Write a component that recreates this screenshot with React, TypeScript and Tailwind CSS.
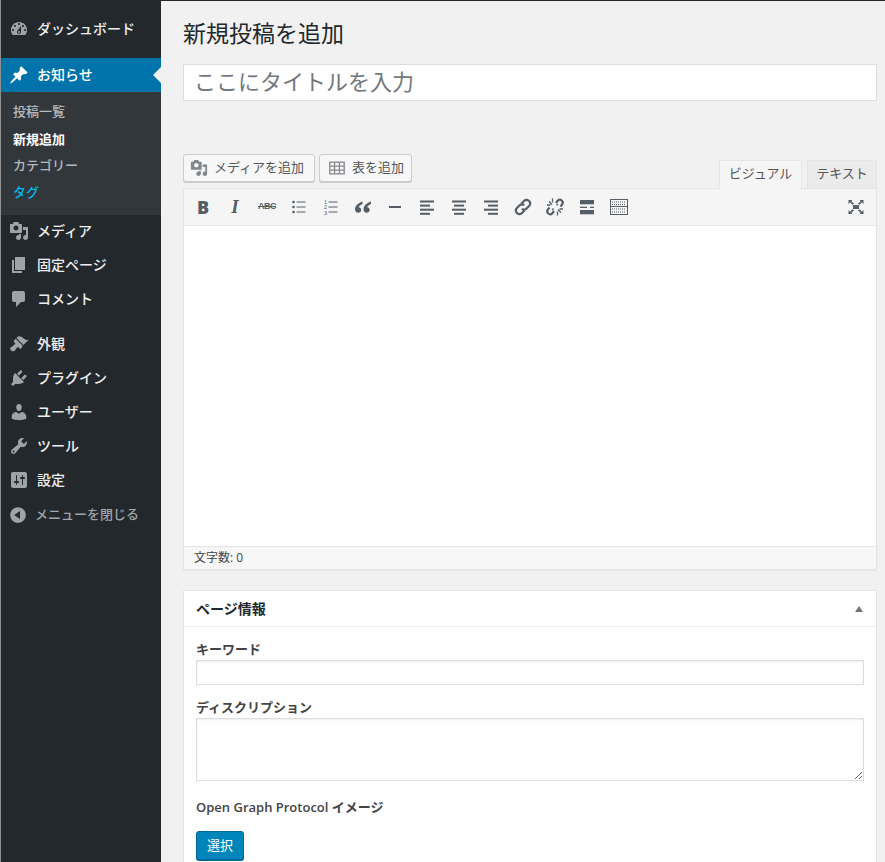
import type { ReactNode } from 'react'

const font = { dashboard: 'M3.76 16h12.48c1.1-1.37 1.76-3.11 1.76-5 0-4.42-3.58-8-8-8s-8 3.58-8 8c0 1.89.66 3.63 1.76 5zM10 4c.55 0 1 .45 1 1s-.45 1-1 1-1-.45-1-1 .45-1 1-1zM6 6c.55 0 1 .45 1 1s-.45 1-1 1-1-.45-1-1 .45-1 1-1zm8 0c.55 0 1 .45 1 1s-.45 1-1 1-1-.45-1-1 .45-1 1-1zm-5.37 5.55L12 7v6c0 1.1-.9 2-2 2s-2-.9-2-2c0-.57.24-1.08.63-1.45zM4 10c.55 0 1 .45 1 1s-.45 1-1 1-1-.45-1-1 .45-1 1-1zm12 0c.55 0 1 .45 1 1s-.45 1-1 1-1-.45-1-1 .45-1 1-1zm-5 3c0-.55-.45-1-1-1s-1 .45-1 1 .45 1 1 1 1-.45 1-1z',
  pin: 'M10.44 3.02l1.82-1.82 6.36 6.35-1.83 1.82c-1.05-.68-2.48-.57-3.41.36l-.75.75c-.92.93-1.04 2.35-.35 3.41l-1.83 1.82-2.41-2.41-2.8 2.79c-.42.42-3.38 2.71-3.8 2.29s1.86-3.39 2.28-3.81l2.79-2.79L4.1 9.36l1.83-1.82c1.05.69 2.48.57 3.4-.36l.75-.75c.93-.92 1.05-2.35.36-3.41z',
  media: 'M13 11V4c0-.55-.45-1-1-1h-1.67L9 1H5L3.67 3H2c-.55 0-1 .45-1 1v7c0 .55.45 1 1 1h10c.55 0 1-.45 1-1zM7 4.5c1.38 0 2.5 1.12 2.5 2.5S8.38 9.5 7 9.5 4.5 8.38 4.5 7 5.62 4.5 7 4.5zM14 6h5v10.5c0 1.38-1.12 2.5-2.5 2.5S14 17.88 14 16.5s1.12-2.5 2.5-2.5c.17 0 .34.02.5.05V9h-3V6zm-4 8.05V13h2v3.5c0 1.38-1.12 2.5-2.5 2.5S7 17.88 7 16.5 8.12 14 9.5 14c.17 0 .34.02.5.05z',
  page: 'M6 15V2h10v13H6zm-1 1h8v2H3V5h2v11z',
  comments: 'M5 2h9c1.1 0 2 .9 2 2v7c0 1.1-.9 2-2 2h-2l-5 5v-5H5c-1.1 0-2-.9-2-2V4c0-1.1.9-2 2-2z',
  appearance: 'M14.48 11.06L7.41 3.99l1.5-1.5c.5-.56 2.3-.47 3.51.32 1.21.8 1.43 1.28 2.91 2.1 1.18.64 2.45 1.26 4.45.85zm-.71.71L6.7 4.7 4.93 6.47c-.39.39-.39 1.02 0 1.41l1.06 1.06c.39.39.39 1.03 0 1.42-.6.6-1.43 1.11-2.21 1.69-.35.26-.7.53-1.01.84C1.43 13.23 1 14.13 1.25 15c.25.87 1.42 2.05 2.29 2.3.87.25 1.77-.18 2.11-.53.3-.3.58-.66.84-1.01.58-.78 1.09-1.61 1.69-2.21.39-.39 1.03-.39 1.42 0l1.06 1.06c.39.39 1.02.39 1.41 0z',
  plugins: 'M13.11 4.36L9.87 7.6 8 5.73l3.24-3.24c.35-.34 1.05-.2 1.56.32.52.51.66 1.21.31 1.55zm-8 1.77l.91-1.12 9.01 9.01-1.19.84c-.71.71-2.63 1.16-3.82 1.16H6.14L4.9 17.26c-.59.59-1.54.59-2.12 0-.59-.58-.59-1.53 0-2.12l1.24-1.24v-3.88c0-1.13.4-3.19 1.09-3.89zm7.26 3.97l3.24-3.24c.34-.35 1.04-.21 1.55.31.52.51.66 1.21.31 1.55l-3.24 3.25z',
  users: 'M10 9.25c-2.27 0-2.73-3.44-2.73-3.44C7 4.02 7.82 2 9.97 2c2.16 0 2.98 2.02 2.71 3.81 0 0-.41 3.44-2.68 3.44zm0 2.57L12.72 10c2.39 0 4.52 2.33 4.52 4.53v2.49s-3.65 1.13-7.24 1.13c-3.65 0-7.24-1.13-7.24-1.13v-2.49c0-2.25 1.94-4.48 4.47-4.48z',
  tools: 'M16.68 9.77c-1.34 1.34-3.3 1.67-4.95.99l-5.41 6.52c-.99.99-2.59.99-3.58 0s-.99-2.59 0-3.57l6.52-5.42c-.68-1.65-.35-3.61.99-4.95 1.28-1.28 3.12-1.62 4.72-1.06l-2.89 2.89 2.82 2.82 2.86-2.87c.53 1.58.18 3.39-1.08 4.65zM3.81 16.21c.4.39 1.04.39 1.43 0 .4-.4.4-1.04 0-1.43-.39-.4-1.03-.4-1.43 0-.39.39-.39 1.03 0 1.43z',
  settings: 'M18 16V4c0-1.1-.9-2-2-2H4c-1.1 0-2 .9-2 2v12c0 1.1.9 2 2 2h12c1.1 0 2-.9 2-2zM8 11h1c.55 0 1 .45 1 1s-.45 1-1 1H8v1.5c0 .28-.22.5-.5.5s-.5-.22-.5-.5V13H6c-.55 0-1-.45-1-1s.45-1 1-1h1V5.5c0-.28.22-.5.5-.5s.5.22.5.5V11zm5-2h-1c-.55 0-1-.45-1-1s.45-1 1-1h1V5.5c0-.28.22-.5.5-.5s.5.22.5.5V7h1c.55 0 1 .45 1 1s-.45 1-1 1h-1v5.5c0 .28-.22.5-.5.5s-.5-.22-.5-.5V9z',
  collapse: 'M10 2.16c4.33 0 7.84 3.51 7.84 7.84s-3.51 7.84-7.84 7.84S2.16 14.33 2.16 10 5.71 2.16 10 2.16zm2 11.72V6.12L6.18 9.97z',
}

function Dash({ d, className }: { d: string; className: string }) {
  return (
    <svg viewBox="0 0 20 20" className={className} fill="currentColor">
      <path d={d} />
    </svg>
  )
}

function MenuItem({ icon, label }: { icon: string; label: string }) {
  return (
    <a className="flex h-[34px] items-center text-[14px] font-medium text-[#eeeeee]">
      <span className="flex w-9 justify-center text-[#9ea3a8]">
        <Dash d={icon} className="h-5 w-5" />
      </span>
      <span className="pb-[2px]">{label}</span>
    </a>
  )
}

function ToolIcon({ children }: { children: ReactNode }) {
  return <span className="flex h-[30px] w-8 items-center justify-center text-[#555d66]">{children}</span>
}

function Svg({ children }: { children: ReactNode }) {
  return (
    <svg viewBox="0 0 20 20" className="h-5 w-5" fill="currentColor">
      {children}
    </svg>
  )
}

function Lines({ rows }: { rows: number[][] }) {
  return (
    <Svg>
      {rows.map(([x, w], i) => (
        <rect key={i} x={x} y={3.5 + i * 4.1} width={w} height="2" />
      ))}
    </Svg>
  )
}

export default function App() {
  return (
    <div
      className="flex h-[862px] w-[885px] overflow-hidden bg-[#f1f1f1] text-[13px] text-[#444444]"
      style={{ fontFamily: '"Open Sans", "Noto Sans CJK JP", sans-serif' }}
    >
      <aside className="w-[161px] shrink-0 border-l border-[#8f8f8f] bg-[#23282d] pt-3">
        <MenuItem icon={font.dashboard} label="ダッシュボード" />
        <div className="h-3" />
        <a className="relative flex h-[34px] items-center bg-[#0073aa] text-[14px] font-medium text-white">
          <span className="flex w-9 justify-center">
            <Dash d={font.pin} className="h-5 w-5" />
          </span>
          <span className="pb-[2px]">お知らせ</span>
          <span className="absolute right-0 top-[9px] border-y-8 border-r-8 border-y-transparent border-r-[#f1f1f1]" />
        </a>
        <ul className="flex h-[123px] flex-col bg-[#32373c] pt-[7px] pl-3 text-[13px] font-medium text-[#b4b9be]">
          <li className="h-[27px] leading-[25px]">投稿一覧</li>
          <li className="h-[26px] leading-[26px] font-bold text-white">新規追加</li>
          <li className="h-[27px] leading-[26px]">カテゴリー</li>
          <li className="h-[26px] leading-[26px] text-[#00b9eb]">タグ</li>
        </ul>
        <div className="-mt-px">
          <MenuItem icon={font.media} label="メディア" />
          <MenuItem icon={font.page} label="固定ページ" />
          <MenuItem icon={font.comments} label="コメント" />
          <div className="h-[11px]" />
          <MenuItem icon={font.appearance} label="外観" />
          <MenuItem icon={font.plugins} label="プラグイン" />
          <MenuItem icon={font.users} label="ユーザー" />
          <MenuItem icon={font.tools} label="ツール" />
          <MenuItem icon={font.settings} label="設定" />
        </div>
        <div className="mt-px flex h-[34px] items-center text-[13px] font-medium text-[#a0a5aa]">
          <span className="flex w-[34px] justify-center text-[#9ea3a8]">
            <Dash d={font.collapse} className="h-5 w-5" />
          </span>
          <span>メニューを閉じる</span>
        </div>
      </aside>

      <main className="min-w-0 flex-1 border-t border-[#23282d] pl-[22px] pr-2">
        <h1 className="mt-[16px] text-[23px] leading-[32px] font-normal text-[#23282d]">新規投稿を追加</h1>
        <input
          placeholder="ここにタイトルを入力"
          className="mt-[15px] h-[37px] w-full border border-[#dddddd] bg-white px-[10px] pb-[3px] text-[22px] outline-none placeholder:text-[#72777c]"
        />

        <div className="mt-[53px] flex h-[35px] items-start justify-between">
          <div className="flex gap-1 text-[#555555]">
            <button className="flex h-[28px] w-[132px] items-center rounded-[3px] border border-[#cccccc] bg-[#f7f7f7] pl-[6px] shadow-[0_1px_0_#cccccc]">
              <Dash d={font.media} className="mr-[6px] h-[18px] w-[18px] text-[#82878c]" />
              メディアを追加
            </button>
            <button className="flex h-[28px] w-[93px] items-center rounded-[3px] border border-[#cccccc] bg-[#f7f7f7] pl-2 shadow-[0_1px_0_#cccccc]">
              <svg viewBox="0 0 20 20" className="mr-[6px] h-[18px] w-[18px] text-[#82878c]" fill="none" stroke="currentColor" strokeWidth="1.4">
                <rect x="2" y="3.5" width="16" height="13" />
                <path d="M2 8h16M2 12.3h16M7.3 3.5v13M12.7 3.5v13" />
              </svg>
              表を追加
            </button>
          </div>
          <div className="mt-[6px] flex items-start gap-[5px] text-[#555555]">
            <div className="relative z-10 h-[30px] w-[83px] border border-b-0 border-[#e5e5e5] bg-[#f5f5f5] text-center leading-[24px]">ビジュアル</div>
            <div className="h-[29px] w-[70px] border border-[#e5e5e5] bg-[#ebebeb] text-center leading-[24px]">テキスト</div>
          </div>
        </div>

        <section className="-mt-px border border-[#e5e5e5] bg-white shadow-[0_1px_1px_rgba(0,0,0,0.04)]">
          <div className="flex h-[37px] items-center justify-between border-b border-[#e5e5e5] bg-[#f5f5f5] pl-[3px] pr-1">
            <div className="flex items-center">
              <ToolIcon>
                <span className="text-[18px] font-extrabold" style={{ fontFamily: '"Open Sans", sans-serif' }}>B</span>
              </ToolIcon>
              <ToolIcon>
                <span className="text-[19px] font-bold italic" style={{ fontFamily: '"Liberation Serif", serif' }}>I</span>
              </ToolIcon>
              <ToolIcon>
                <span className="text-[9px] font-bold tracking-[-0.5px] line-through" style={{ fontFamily: '"Liberation Sans", sans-serif' }}>ABC</span>
              </ToolIcon>
              <ToolIcon>
                <Svg>
                  <circle cx="4.5" cy="5" r="1.3" />
                  <circle cx="4.5" cy="10" r="1.3" />
                  <circle cx="4.5" cy="15" r="1.3" />
                  <rect x="7.5" y="4.5" width="9" height="1" />
                  <rect x="7.5" y="9.5" width="9" height="1" />
                  <rect x="7.5" y="14.5" width="9" height="1" />
                </Svg>
              </ToolIcon>
              <ToolIcon>
                <Svg>
                  <text x="3" y="6.5" fontSize="5.5" fontFamily="Liberation Sans">1</text>
                  <text x="3" y="12" fontSize="5.5" fontFamily="Liberation Sans">2</text>
                  <text x="3" y="17.5" fontSize="5.5" fontFamily="Liberation Sans">3</text>
                  <rect x="7.5" y="4.5" width="9" height="1" />
                  <rect x="7.5" y="9.5" width="9" height="1" />
                  <rect x="7.5" y="14.5" width="9" height="1" />
                </Svg>
              </ToolIcon>
              <ToolIcon>
                <Svg>
                  <path d="M9.500 4.500C5.500 6 2 8.500 2 12.300c0 2.200 1.300 3.500 3.200 3.500 1.800 0 3-1.200 3-2.800 0-1.600-1-2.700-2.500-2.800.3-1.300 1.900-2.500 3.800-3.300zM18 4.500c-4 1.500-7.500 4-7.500 7.800 0 2.200 1.300 3.500 3.200 3.500 1.800 0 3-1.200 3-2.800 0-1.600-1-2.700-2.500-2.800.3-1.300 1.900-2.500 3.800-3.300z" />
                </Svg>
              </ToolIcon>
              <ToolIcon>
                <Svg>
                  <rect x="4" y="9" width="12" height="2" />
                </Svg>
              </ToolIcon>
              <ToolIcon>
                <Lines rows={[[3, 14], [3, 10], [3, 14], [3, 10]]} />
              </ToolIcon>
              <ToolIcon>
                <Lines rows={[[3, 14], [5, 10], [3, 14], [5, 10]]} />
              </ToolIcon>
              <ToolIcon>
                <Lines rows={[[3, 14], [7, 10], [3, 14], [7, 10]]} />
              </ToolIcon>
              <ToolIcon>
                <svg viewBox="0 0 20 20" className="h-5 w-5" fill="none" stroke="currentColor" strokeWidth="2.200">
                  <path d="M8.500 6.500l2.800-2.800a3.100 3.100 0 0 1 4.400 0l.6.600a3.100 3.100 0 0 1 0 4.400l-3 3a3.100 3.100 0 0 1-4.400 0" />
                  <path d="M11.500 13.500l-2.800 2.800a3.100 3.100 0 0 1-4.400 0l-.6-.6a3.100 3.100 0 0 1 0-4.400l3-3a3.100 3.100 0 0 1 4.400 0" />
                </svg>
              </ToolIcon>
              <ToolIcon>
                <svg viewBox="0 0 20 20" className="h-5 w-5" fill="none" stroke="currentColor" strokeWidth="2.200">
                  <path d="M11 6l1.600-2.200a3 3 0 0 1 4.100-.3 3 3 0 0 1 .3 4.100L15.500 9.500M9 14l-1.600 2.200a3 3 0 0 1-4.100.3 3 3 0 0 1-.3-4.100L4.500 10.500" />
                  <path strokeWidth="1.300" d="M4 4.500l3 3M7.500 1.500v4M2 8h3.500M16 15.500l-3-3M12.500 18.500v-4M18 12h-3.500M13 7l-1.500 1.500M7 13l1.500-1.500" />
                </svg>
              </ToolIcon>
              <ToolIcon>
                <Svg>
                  <rect x="3" y="3" width="14" height="4.300" />
                  <rect x="3" y="9.700" width="7" height="1.300" />
                  <rect x="13" y="9.700" width="4" height="1.300" />
                  <rect x="3" y="13" width="14" height="4.300" />
                </Svg>
              </ToolIcon>
              <ToolIcon>
                <svg viewBox="0 0 20 20" className="h-5 w-5" fill="none" stroke="currentColor">
                  <rect x="1.500" y="2.500" width="17" height="15" />
                  <path d="M1.500 9.500h17" />
                  <path strokeDasharray="1 1" d="M3 5h14M3 7.500h14M3 12h14M3 15h14" />
                </svg>
              </ToolIcon>
            </div>
            <ToolIcon>
              <Svg>
                <rect x="7" y="8" width="6" height="4" />
                <path d="M2.500 3h4L5.300 4.200 8 6.500 6.500 8 4.200 5.300 2.500 7zM17.500 3h-4l1.200 1.200L12 6.500 13.500 8l2.300-2.700L17.500 7zM2.500 17h4l-1.200-1.200L8 13.500 6.500 12l-2.300 2.700L2.500 13zM17.500 17h-4l1.200-1.200L12 13.500l1.500-1.500 2.300 2.700 1.700-1.700z" />
              </Svg>
            </ToolIcon>
          </div>
          <div className="h-[320px]" />
          <div className="flex h-[23px] items-center border-t border-[#e5e5e5] bg-[#f7f7f7] pl-[10px] text-[12px] text-[#444444]">文字数: 0</div>
        </section>

        <section className="mt-5 border border-[#e5e5e5] bg-white pb-4">
          <div className="flex h-[36px] items-center justify-between border-b border-[#eeeeee] pl-3 pr-[13px]">
            <h2 className="text-[14px] font-bold text-[#23282d]">ページ情報</h2>
            <span className="border-x-[4px] border-b-[6px] border-x-transparent border-b-[#72777c]" />
          </div>
          <div className="px-3 pt-[13px] font-semibold">
            <label className="block h-[20px] leading-[18px]">キーワード</label>
            <input className="block h-[25px] w-full border border-[#dddddd] shadow-[inset_0_1px_2px_rgba(0,0,0,0.07)] outline-none" />
            <label className="mt-[13px] block h-[20px] leading-[18px]">ディスクリプション</label>
            <textarea className="block h-[63px] w-full resize-y border border-[#dddddd] shadow-[inset_0_1px_2px_rgba(0,0,0,0.07)] outline-none" />
            <label className="mt-[17px] block leading-[18px]">Open Graph Protocol イメージ</label>
            <button className="mt-[15px] h-[29px] w-[48px] rounded-[3px] border border-[#006799] bg-[#0085ba] font-normal text-white shadow-[0_1px_0_#006799]">選択</button>
          </div>
        </section>
      </main>
    </div>
  )
}
